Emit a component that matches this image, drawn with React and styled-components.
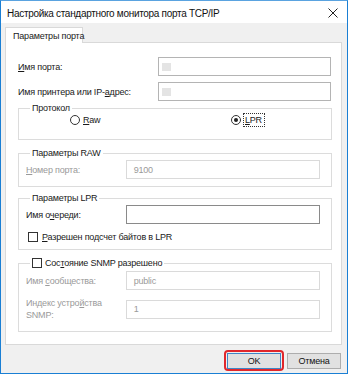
import React from "react";
import styled, { createGlobalStyle, css } from "styled-components";

const Global = createGlobalStyle`
  html, body { margin: 0; padding: 0; background: #ffffff; }
  body { font-family: "Liberation Sans", Arial, sans-serif; }
  * { box-sizing: border-box; }
`;

const FONT = `"Liberation Sans", Arial, sans-serif`;

const Window = styled.div`
  width: 348px;
  height: 374px;
  border: 1px solid #1a7fd4;
  border-top-color: #5aa3e0;
  background: #f0f0f0;
  display: flex;
  flex-direction: column;
  font-family: ${FONT};
  font-size: 9px;
  letter-spacing: -0.2px;
  color: #1a1a1a;
`;

const TitleBar = styled.div`
  height: 22px;
  flex: none;
  background: #ffffff;
  display: flex;
  align-items: center;
  justify-content: space-between;
  padding: 2px 9px 0 6px;
  font-size: 10px;
  letter-spacing: -0.3px;
  color: #111;
`;

const Body = styled.div`
  flex: 1;
  display: flex;
  flex-direction: column;
  padding: 4px 5px 0 4px;
`;

const TabStrip = styled.div`
  display: flex;
  height: 15px;
`;

const Tab = styled.div`
  background: #ffffff;
  border: 1px solid #d9d9d9;
  border-bottom: none;
  padding: 3px 6px 0 7px;
  white-space: nowrap;
  width: 78px;
  margin-bottom: -1px;
  position: relative;
  z-index: 1;
`;

const Panel = styled.div`
  background: #ffffff;
  border: 1px solid #d9d9d9;
  height: 303px;
  padding: 14px 10px 0 12px;
  display: flex;
  flex-direction: column;
`;

const TopRow = styled.div`
  display: flex;
  align-items: center;
  justify-content: space-between;
  margin-bottom: ${(p) => p.$mb || 0}px;
`;

const Input = styled.div`
  height: 19px;
  width: ${(p) => p.$w}px;
  border: 1px solid ${(p) => (p.$dark ? "#8a8a8a" : p.$disabled ? "#dadada" : "#b4b4b4")};
  background: #fff;
  display: flex;
  align-items: center;
  padding-left: 7px;
  color: ${(p) => (p.$disabled ? "#9a9a9a" : "#111")};
`;

const Blur = styled.span`
  display: inline-block;
  width: 9px;
  height: 8px;
  background: #e4e4e4;
  margin-left: -4px;
  filter: blur(0.6px);
`;

const Group = styled.fieldset`
  margin: 0 0 ${(p) => p.$mb || 0}px 0;
  width: 314px;
  border: 1px solid #dcdcdc;
  padding: 0 11px 0 7px;
  height: ${(p) => p.$h}px;
  min-inline-size: 0;
`;

const Legend = styled.legend`
  margin-left: 4px;
  padding: 0 2px;
  line-height: 10px;
  display: flex;
  align-items: center;
  gap: 3px;
`;

const RadioRow = styled.div`
  display: flex;
  align-items: center;
  height: 100%;
  padding-top: 1px;
  padding-left: 44px;
`;

const RadioItem = styled.label`
  display: flex;
  align-items: center;
  gap: 3px;
  width: ${(p) => p.$w}px;
`;

const RadioCircle = styled.span`
  width: 10px;
  height: 10px;
  border-radius: 50%;
  border: 1px solid #333;
  display: flex;
  align-items: center;
  justify-content: center;
  background: #fff;
  &::after {
    content: "";
    width: 4px;
    height: 4px;
    border-radius: 50%;
    background: ${(p) => (p.$checked ? "#222" : "transparent")};
  }
`;

const Focus = styled.span`
  outline: 1px dotted #333;
  outline-offset: 0px;
  padding: 1px 2px 1px 1px;
`;

const FieldRow = styled.div`
  display: flex;
  align-items: center;
  margin-top: ${(p) => p.$mt || 0}px;
`;

const Label = styled.div`
  width: 100px;
  color: ${(p) => (p.$disabled ? "#9a9a9a" : "#1a1a1a")};
  line-height: 12px;
`;

const Check = styled.span`
  width: 10px;
  height: 10px;
  border: 1px solid #333;
  background: #fff;
  display: inline-block;
  flex: none;
`;

const CheckRow = styled.label`
  display: flex;
  align-items: center;
  gap: 4px;
  margin-top: ${(p) => p.$mt || 0}px;
  margin-left: 2px;
`;

const U = styled.span`
  text-decoration: underline;
  text-underline-offset: 1px;
`;

const ButtonRow = styled.div`
  display: flex;
  justify-content: flex-end;
  gap: 6px;
  padding: 8px 1px 0 0;
`;

const Button = styled.div`
  position: relative;
  width: ${(p) => p.$w}px;
  height: 16px;
  background: #e1e1e1;
  border: 1px solid ${(p) => (p.$default ? "#3f86c6" : "#adadad")};
  display: flex;
  align-items: center;
  justify-content: center;
  color: #111;
  ${(p) =>
    p.$highlight &&
    css`
      &::before {
        content: "";
        position: absolute;
        inset: -4px -4px -3px -4px;
        border: 2px solid #e0272c;
        border-radius: 4px;
      }
    `}
`;

export default function App() {
  return (
    <>
      <Global />
      <Window>
        <TitleBar>
          <span>Настройка стандартного монитора порта TCP/IP</span>
          <svg width="10" height="10" viewBox="0 0 10 10">
            <path d="M0.5 0.5 L9.5 9.5 M9.5 0.5 L0.5 9.5" stroke="#222" strokeWidth="1" />
          </svg>
        </TitleBar>
        <Body>
          <TabStrip>
            <Tab>Параметры порта</Tab>
          </TabStrip>
          <Panel>
            <TopRow $mb={6}>
              <span><U>И</U>мя порта:</span>
              <Input $w={173}><Blur /></Input>
            </TopRow>
            <TopRow $mb={2}>
              <span>Имя принтера или IP-<U>а</U>дрес:</span>
              <Input $w={173}><Blur /></Input>
            </TopRow>
            <Group $h={37} $mb={8}>
              <Legend>Протокол</Legend>
              <RadioRow>
                <RadioItem $w={161}>
                  <RadioCircle />
                  <span><U>R</U>aw</span>
                </RadioItem>
                <RadioItem>
                  <RadioCircle $checked />
                  <Focus><U>L</U>PR</Focus>
                </RadioItem>
              </RadioRow>
            </Group>
            <Group $h={39} $mb={6}>
              <Legend>Параметры RAW</Legend>
              <FieldRow $mt={2}>
                <Label $disabled><U>Н</U>омер порта:</Label>
                <Input $w={195} $disabled>9100</Input>
              </FieldRow>
            </Group>
            <Group $h={57} $mb={8}>
              <Legend>Параметры LPR</Legend>
              <FieldRow $mt={2}>
                <Label>Имя о<U>ч</U>ереди:</Label>
                <Input $w={195} $dark />
              </FieldRow>
              <CheckRow $mt={8}>
                <Check />
                <span><U>Р</U>азрешен подсчет байтов в LPR</span>
              </CheckRow>
            </Group>
            <Group $h={74}>
              <Legend>
                <Check />
                <span>Сос<U>т</U>ояние SNMP разрешено</span>
              </Legend>
              <FieldRow $mt={3}>
                <Label $disabled>Имя <U>с</U>ообщества:</Label>
                <Input $w={195} $disabled>public</Input>
              </FieldRow>
              <FieldRow $mt={7}>
                <Label $disabled>Индекс устро<U>й</U>ства<br />SNMP:</Label>
                <Input $w={195} $disabled>1</Input>
              </FieldRow>
            </Group>
          </Panel>
          <ButtonRow>
            <Button $w={54} $default $highlight>OK</Button>
            <Button $w={54}>Отмена</Button>
          </ButtonRow>
        </Body>
      </Window>
    </>
  );
}
